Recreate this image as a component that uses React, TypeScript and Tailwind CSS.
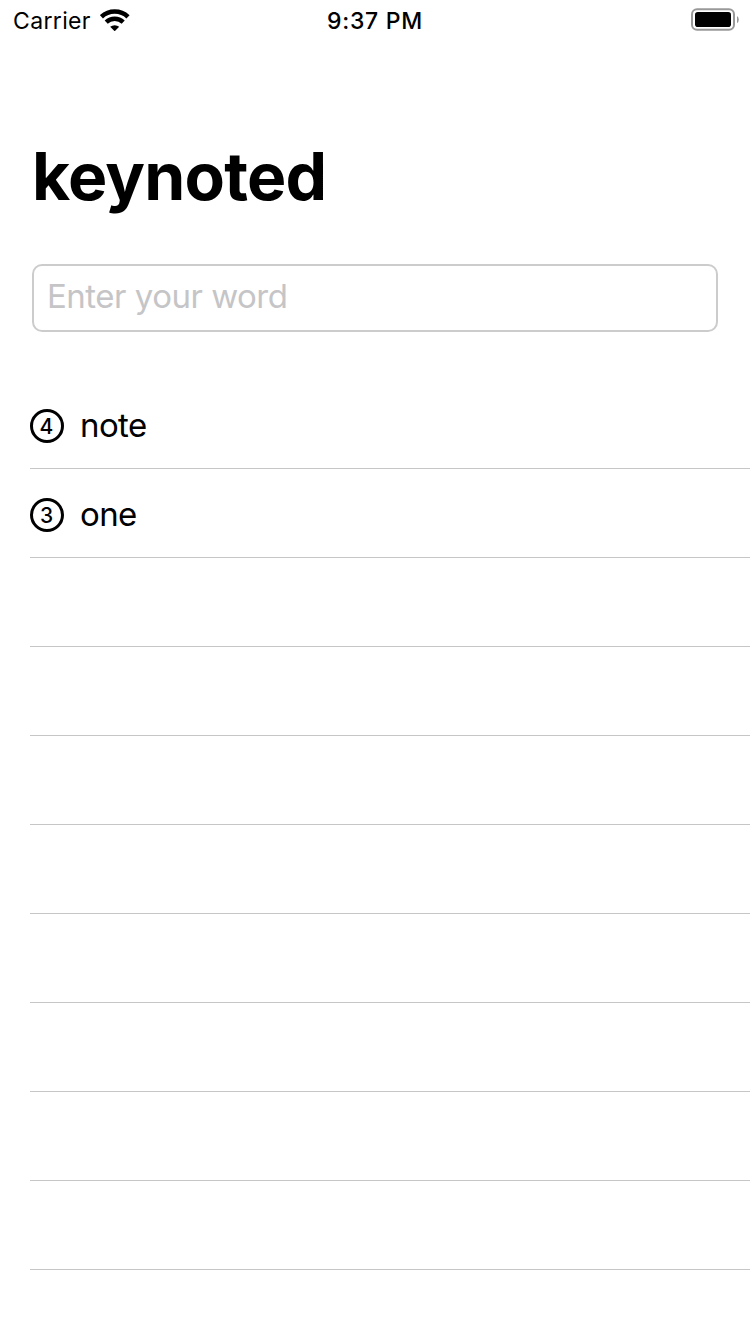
const entries = [
  { count: 4, word: "note" },
  { count: 3, word: "one" },
];

const EMPTY_ROWS = 8;

function WifiIcon() {
  return (
    <svg className="ml-[9px] h-[22px] w-[30px]" viewBox="0 0 30 22" fill="none">
      <path d="M1.4 7.8 A19.4 19.4 0 0 1 28 7.8" stroke="black" strokeWidth="4.6" />
      <path d="M6.2 13.2 A12.2 12.2 0 0 1 23.2 13.2" stroke="black" strokeWidth="4.4" />
      <path d="M10.2 17.8 A7 7 0 0 1 19.2 17.8 L15.2 21.7 Q14.7 22.1 14.2 21.7 Z" fill="black" />
    </svg>
  );
}

function BatteryIcon() {
  return (
    <svg className="h-[24px] w-[50px]" viewBox="0 0 50 24" fill="none">
      <rect x="2" y="1.2" width="42" height="20.6" rx="5" stroke="#999999" strokeWidth="2" />
      <rect x="5" y="4" width="36" height="15" rx="2.8" fill="black" />
      <path d="M47 8 Q48.8 9.2 48.8 11.6 Q48.8 14 47 15.2 Z" fill="#999999" />
    </svg>
  );
}

function StatusBar() {
  return (
    <header className="grid h-10 grid-cols-3 items-center text-[23px] leading-10">
      <div className="flex items-center pl-[13px]">
        <span className="pt-0.5 leading-[38px] tracking-[0.35px]">Carrier</span>
        <WifiIcon />
      </div>
      <span className="pt-0.5 text-center leading-[38px] font-[550] tracking-[0.7px]">9:37 PM</span>
      <div className="flex justify-end pr-[10px]">
        <BatteryIcon />
      </div>
    </header>
  );
}

function CountBadge({ count }: { count: number }) {
  return (
    <span className="flex size-[34px] items-center justify-center rounded-full border-[3px] border-black pt-px pr-px text-[21px] leading-none font-[550]">
      {count}
    </span>
  );
}

export default function App() {
  return (
    <main className="h-[1334px] w-[750px] overflow-hidden bg-white font-['Inter',sans-serif] text-black">
      <StatusBar />
      <h1 className="mt-[94px] ml-8 h-[84px] text-[66px] leading-[84px] font-bold tracking-[-0.8px]">keynoted</h1>
      <div className="mx-8 mt-[46px] flex h-[68px] rounded-[10px] border-2 border-[#cccccc] pl-[13px]">
        <input
          className="w-full bg-transparent pb-[3px] text-[33px] tracking-[-0.5px] outline-none placeholder:text-[#c5c5c7]"
          placeholder="Enter your word"
        />
      </div>
      <ul className="mt-12 ml-[30px]">
        {entries.map((entry) => (
          <li key={entry.word} className="flex h-[89px] items-center border-b border-[#c6c6c8] pt-[3px]">
            <CountBadge count={entry.count} />
            <span className="ml-4 pb-0.5 text-[33px] leading-[50px] tracking-[-0.6px]">{entry.word}</span>
          </li>
        ))}
        {Array.from({ length: EMPTY_ROWS }, (_, i) => (
          <li key={i} className="h-[89px] border-b border-[#c6c6c8]" />
        ))}
      </ul>
    </main>
  );
}
